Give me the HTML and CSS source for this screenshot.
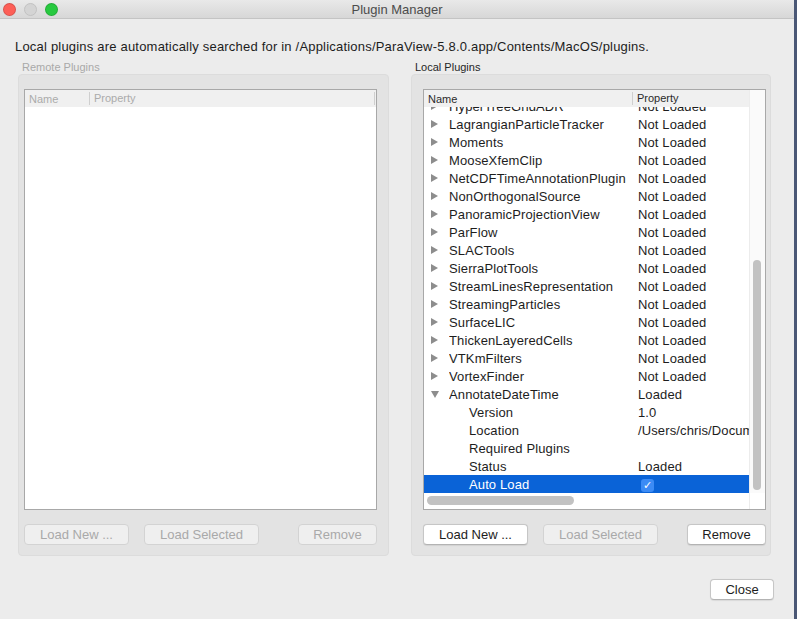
FILE: index.html
```html
<!DOCTYPE html>
<html lang="en">
<head>
    <meta charset="UTF-8">
    <title>Plugin Manager</title>
    <link rel="stylesheet" href="styles.css">
</head>
<body>
    <div class="window">
        <div class="titlebar">
            <div class="lights">
                <span class="light red"></span>
                <span class="light gray"></span>
                <span class="light green"></span>
            </div>
            <div class="title">Plugin Manager</div>
        </div>

        <p class="info">Local plugins are automatically searched for in /Applications/ParaView-5.8.0.app/Contents/MacOS/plugins.</p>

        <div class="panels">
            <!-- remote plugins (disabled) -->
            <div class="panel remote">
                <div class="group-label disabled">Remote Plugins</div>
                <div class="group">
                    <div class="tree">
                        <div class="tree-main">
                            <div class="tree-header">
                                <div class="h-name">Name</div>
                                <div class="h-prop">Property</div>
                            </div>
                            <div class="viewport"></div>
                        </div>
                    </div>
                    <div class="buttons">
                        <button class="btn" disabled>Load New ...</button>
                        <button class="btn" disabled>Load Selected</button>
                        <button class="btn push-right" disabled>Remove</button>
                    </div>
                </div>
            </div>

            <!-- local plugins -->
            <div class="panel local">
                <div class="group-label">Local Plugins</div>
                <div class="group">
                    <div class="tree">
                        <div class="tree-main">
                            <div class="tree-header">
                                <div class="h-name">Name</div>
                                <div class="h-prop">Property</div>
                            </div>
                            <div class="viewport">
                                <div class="rows">
                                    <div class="row"><span class="arrow"></span><span class="name">HyperTreeGridADR</span><span class="prop">Not Loaded</span></div>
                                    <div class="row"><span class="arrow"></span><span class="name">LagrangianParticleTracker</span><span class="prop">Not Loaded</span></div>
                                    <div class="row"><span class="arrow"></span><span class="name">Moments</span><span class="prop">Not Loaded</span></div>
                                    <div class="row"><span class="arrow"></span><span class="name">MooseXfemClip</span><span class="prop">Not Loaded</span></div>
                                    <div class="row"><span class="arrow"></span><span class="name">NetCDFTimeAnnotationPlugin</span><span class="prop">Not Loaded</span></div>
                                    <div class="row"><span class="arrow"></span><span class="name">NonOrthogonalSource</span><span class="prop">Not Loaded</span></div>
                                    <div class="row"><span class="arrow"></span><span class="name">PanoramicProjectionView</span><span class="prop">Not Loaded</span></div>
                                    <div class="row"><span class="arrow"></span><span class="name">ParFlow</span><span class="prop">Not Loaded</span></div>
                                    <div class="row"><span class="arrow"></span><span class="name">SLACTools</span><span class="prop">Not Loaded</span></div>
                                    <div class="row"><span class="arrow"></span><span class="name">SierraPlotTools</span><span class="prop">Not Loaded</span></div>
                                    <div class="row"><span class="arrow"></span><span class="name">StreamLinesRepresentation</span><span class="prop">Not Loaded</span></div>
                                    <div class="row"><span class="arrow"></span><span class="name">StreamingParticles</span><span class="prop">Not Loaded</span></div>
                                    <div class="row"><span class="arrow"></span><span class="name">SurfaceLIC</span><span class="prop">Not Loaded</span></div>
                                    <div class="row"><span class="arrow"></span><span class="name">ThickenLayeredCells</span><span class="prop">Not Loaded</span></div>
                                    <div class="row"><span class="arrow"></span><span class="name">VTKmFilters</span><span class="prop">Not Loaded</span></div>
                                    <div class="row"><span class="arrow"></span><span class="name">VortexFinder</span><span class="prop">Not Loaded</span></div>
                                    <div class="row"><span class="arrow open"></span><span class="name">AnnotateDateTime</span><span class="prop">Loaded</span></div>
                                    <div class="row child"><span class="name">Version</span><span class="prop">1.0</span></div>
                                    <div class="row child"><span class="name">Location</span><span class="prop">/Users/chris/Documents/ParaView/plugins</span></div>
                                    <div class="row child"><span class="name">Required Plugins</span><span class="prop"></span></div>
                                    <div class="row child"><span class="name">Status</span><span class="prop">Loaded</span></div>
                                    <div class="row child selected"><span class="name">Auto Load</span><span class="prop"><span class="check">&#10003;</span></span></div>
                                </div>
                            </div>
                            <div class="hscroll"><div class="hthumb"></div></div>
                        </div>
                        <div class="vscroll">
                            <div class="vtrack"><div class="vthumb"></div></div>
                            <div class="corner"></div>
                        </div>
                    </div>
                    <div class="buttons">
                        <button class="btn">Load New ...</button>
                        <button class="btn" disabled>Load Selected</button>
                        <button class="btn push-right">Remove</button>
                    </div>
                </div>
            </div>
        </div>

        <div class="footer">
            <button class="btn close">Close</button>
        </div>
    </div>
</body>
</html>
```

FILE: styles.css
```css
body {
    margin: 0;
    background: #4a5775;
    font-family: "Liberation Sans", Arial, sans-serif;
    font-size: 13px;
    color: #1d1d1d;
}

.window {
    width: 794px;
    height: 619px;
    background: #ececec;
    overflow: hidden;
}

/* title bar */
.titlebar {
    height: 18px;
    border-bottom: 1px solid #c4c4c4;
    background: linear-gradient(to bottom, #e9e9e9, #d7d7d7);
    display: flex;
    align-items: center;
    position: relative;
}

.lights {
    display: flex;
    gap: 8px;
    padding-left: 3px;
}

.light {
    width: 11px;
    height: 11px;
    border-radius: 50%;
    border: 0.5px solid rgba(0, 0, 0, 0.15);
}

.light.red { background: #fd5f57; }
.light.gray { background: #d4d4d4; border-color: #c2c2c2; }
.light.green { background: #27c93f; }

.title {
    position: absolute;
    left: 0;
    right: 0;
    top: 2px;
    text-align: center;
    font-size: 13px;
    color: #4c4c4c;
    pointer-events: none;
}

.info {
    margin: 20px 0 0 15px;
    line-height: 16px;
    letter-spacing: 0.2px;
}

/* panels */
.panels {
    display: flex;
    margin-top: 5px;
}

.panel.remote {
    margin-left: 18px;
    width: 371px;
}

.panel.local {
    margin-left: 22px;
    width: 360px;
}

.group-label {
    font-size: 11px;
    line-height: 14px;
    padding-left: 4px;
    color: #262626;
}

.group-label.disabled {
    color: #a9a9a9;
}

.group {
    height: 482px;
    box-sizing: border-box;
    background: #e3e3e3;
    border: 1px solid #dcdcdc;
    border-radius: 4px;
    padding: 14px 11px 0 5px;
    display: flex;
    flex-direction: column;
}

.local .group {
    padding: 14px 4px 0 11px;
}

/* tree view */
.tree {
    height: 421px;
    box-sizing: border-box;
    border: 1px solid #a8a8a8;
    background: #fff;
    display: flex;
}

.tree-main {
    flex: 1;
    display: flex;
    flex-direction: column;
    min-width: 0;
}

.tree-header {
    height: 17px;
    background: #f0f0f0;
    display: flex;
    align-items: center;
    font-size: 11px;
    color: #2a2a2a;
    flex-shrink: 0;
}

.remote .tree-header {
    color: #ababab;
}

.h-name {
    width: 208px;
    padding-left: 4px;
    box-sizing: border-box;
}

.remote .h-name {
    width: 64px;
}

.h-prop {
    flex: 1;
    border-left: 1px solid #cfcfcf;
    padding-left: 4px;
    line-height: 13px;
}

.remote .h-prop {
    border-right: 1px solid #cfcfcf;
    margin-right: 1px;
}

.viewport {
    flex: 1;
    overflow: hidden;
}

.rows {
    margin-top: -10px;
}

.row {
    height: 18px;
    display: flex;
    align-items: center;
    white-space: nowrap;
    letter-spacing: 0.12px;
}

.row .arrow {
    width: 0;
    height: 0;
    margin: 0 11px 0 7px;
    border-left: 7px solid #8d8d8d;
    border-top: 4px solid transparent;
    border-bottom: 4px solid transparent;
}

.row .arrow.open {
    margin: 0 10px 0 7px;
    border-top: 7px solid #8d8d8d;
    border-left: 4px solid transparent;
    border-right: 4px solid transparent;
    border-bottom: 0;
}

.row .name {
    width: 183px;
    overflow: hidden;
}

.row.child .name {
    width: 163px;
    padding-left: 45px;
}

.row .prop {
    flex: 1;
    overflow: hidden;
    padding-left: 6px;
}

.row.selected {
    background: #0a63d7;
    color: #fff;
}

.check {
    display: inline-flex;
    align-items: center;
    justify-content: center;
    width: 13px;
    height: 13px;
    margin-left: 3px;
    border-radius: 3px;
    background: #3c8bf5;
    color: #fff;
    font-size: 11px;
    line-height: 13px;
}

/* scrollbars */
.hscroll {
    height: 16px;
    flex-shrink: 0;
    padding: 3px 0 0 3px;
    box-sizing: border-box;
}

.hthumb {
    width: 147px;
    height: 9px;
    border-radius: 5px;
    background: #c2c2c2;
}

.vscroll {
    width: 15px;
    display: flex;
    flex-direction: column;
    border-left: 1px solid #ececec;
    background: #fafafa;
}

.vtrack {
    flex: 1;
    padding-left: 3px;
}

.vthumb {
    width: 8px;
    height: 230px;
    margin-top: 170px;
    border-radius: 5px;
    background: #c2c2c2;
}

.corner {
    height: 16px;
    background: #fff;
}

/* buttons */
.buttons {
    display: flex;
    gap: 15px;
    margin-top: 14px;
}

.btn {
    height: 21px;
    font-family: "Liberation Sans", Arial, sans-serif;
    font-size: 13px;
    color: #1d1d1d;
    background: #fff;
    border: 1px solid #c6c6c6;
    border-bottom-color: #b3b3b3;
    border-radius: 4px;
    padding: 0 14px;
    box-shadow: 0 0.5px 1px rgba(0, 0, 0, 0.08);
}

.btn:disabled {
    color: #a9a9a9;
    background: #efefef;
    border-color: #d3d3d3;
    box-shadow: none;
}

.buttons .btn:nth-child(1) { width: 105px; }
.buttons .btn:nth-child(2) { width: 115px; }
.buttons .btn:nth-child(3) { width: 79px; }

.push-right {
    margin-left: auto;
}

.footer {
    display: flex;
    justify-content: flex-end;
    padding: 23px 20px 0 0;
}

.btn.close {
    width: 64px;
}
```
